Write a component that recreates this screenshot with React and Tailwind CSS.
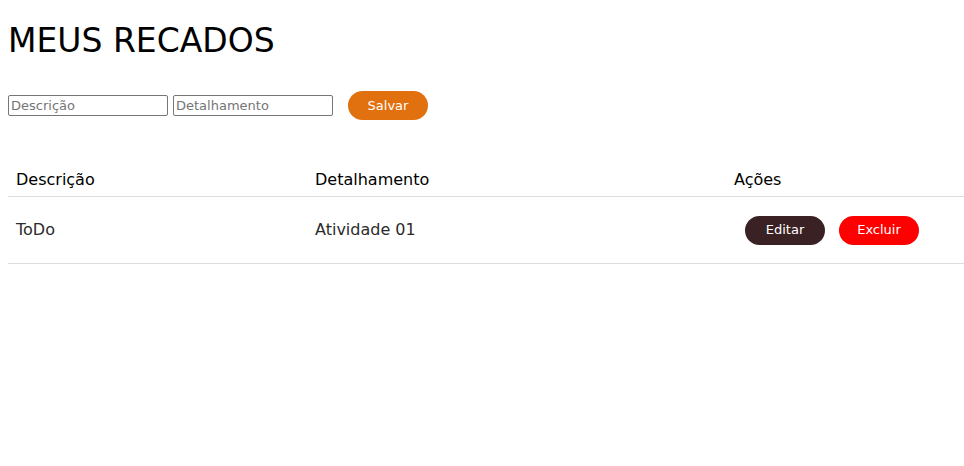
import React from 'react';

const recados = [{ id: 1, descricao: 'ToDo', detalhamento: 'Atividade 01' }];

export default function App() {
  return (
    <div className="min-h-screen bg-white pl-2 text-black" style={{ fontFamily: '"DejaVu Sans", sans-serif' }}>
      <h1 className="pt-5 text-[33px] leading-[41px] font-normal">MEUS RECADOS</h1>

      {/* Form */}
      <div className="mt-[30px] flex h-[29px] items-center">
        <input
          placeholder="Descrição"
          className="h-[21px] w-[160px] rounded-[2px] border border-[#767676] px-[2px] text-[13px] placeholder:text-[#757575]"
        />
        <input
          placeholder="Detalhamento"
          className="ml-[5px] h-[21px] w-[160px] rounded-[2px] border border-[#767676] px-[2px] text-[13px] placeholder:text-[#757575]"
        />
        <button className="ml-[15px] h-[29px] w-[80px] rounded-full bg-[#e1700f] text-[13px] text-white">
          Salvar
        </button>
      </div>

      {/* Table */}
      <div className="mt-[43px]">
        <div className="grid h-[34px] grid-cols-[299px_419px_1fr] items-center border-b border-[#dddddd] text-base font-medium">
          <div className="px-2">Descrição</div>
          <div className="px-2">Detalhamento</div>
          <div className="px-2">Ações</div>
        </div>
        {recados.map((r) => (
          <div
            key={r.id}
            className="grid h-[67px] grid-cols-[299px_419px_1fr] items-center border-b border-[#dddddd] text-base text-[#2b2b2b]"
          >
            <div className="px-2">{r.descricao}</div>
            <div className="px-2">{r.detalhamento}</div>
            <div className="flex items-center gap-[14px] pl-[19px]">
              <button className="h-[29px] w-[80px] rounded-full bg-[#3a2224] text-[13px] text-white">Editar</button>
              <button className="h-[29px] w-[80px] rounded-full bg-[#ff0000] text-[13px] text-white">Excluir</button>
            </div>
          </div>
        ))}
      </div>
    </div>
  );
}
